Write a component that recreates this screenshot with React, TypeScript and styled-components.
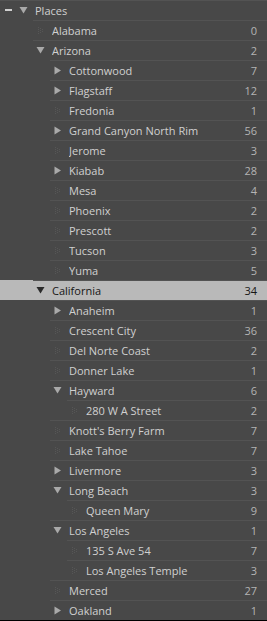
import styled, { createGlobalStyle } from 'styled-components';

type Node = {
	name: string;
	count?: number;
	level: number;
	kind: 'open' | 'closed' | 'leaf';
	selected?: boolean;
};

const rows: Node[] = [
	{ name: 'Places', level: 0, kind: 'open' },
	{ name: 'Alabama', count: 0, level: 1, kind: 'leaf' },
	{ name: 'Arizona', count: 2, level: 1, kind: 'open' },
	{ name: 'Cottonwood', count: 7, level: 2, kind: 'closed' },
	{ name: 'Flagstaff', count: 12, level: 2, kind: 'closed' },
	{ name: 'Fredonia', count: 1, level: 2, kind: 'leaf' },
	{ name: 'Grand Canyon North Rim', count: 56, level: 2, kind: 'closed' },
	{ name: 'Jerome', count: 3, level: 2, kind: 'leaf' },
	{ name: 'Kiabab', count: 28, level: 2, kind: 'closed' },
	{ name: 'Mesa', count: 4, level: 2, kind: 'leaf' },
	{ name: 'Phoenix', count: 2, level: 2, kind: 'leaf' },
	{ name: 'Prescott', count: 2, level: 2, kind: 'leaf' },
	{ name: 'Tucson', count: 3, level: 2, kind: 'leaf' },
	{ name: 'Yuma', count: 5, level: 2, kind: 'leaf' },
	{ name: 'California', count: 34, level: 1, kind: 'open', selected: true },
	{ name: 'Anaheim', count: 1, level: 2, kind: 'closed' },
	{ name: 'Crescent City', count: 36, level: 2, kind: 'leaf' },
	{ name: 'Del Norte Coast', count: 2, level: 2, kind: 'leaf' },
	{ name: 'Donner Lake', count: 1, level: 2, kind: 'leaf' },
	{ name: 'Hayward', count: 6, level: 2, kind: 'open' },
	{ name: '280 W A Street', count: 2, level: 3, kind: 'leaf' },
	{ name: "Knott's Berry Farm", count: 7, level: 2, kind: 'leaf' },
	{ name: 'Lake Tahoe', count: 7, level: 2, kind: 'leaf' },
	{ name: 'Livermore', count: 3, level: 2, kind: 'closed' },
	{ name: 'Long Beach', count: 3, level: 2, kind: 'open' },
	{ name: 'Queen Mary', count: 9, level: 3, kind: 'leaf' },
	{ name: 'Los Angeles', count: 1, level: 2, kind: 'open' },
	{ name: '135 S Ave 54', count: 7, level: 3, kind: 'leaf' },
	{ name: 'Los Angeles Temple', count: 3, level: 3, kind: 'leaf' },
	{ name: 'Merced', count: 27, level: 2, kind: 'leaf' },
	{ name: 'Oakland', count: 1, level: 2, kind: 'closed' },
];

// faint dotted triangle used for rows with no children
const leafDots = [
	[2, 1], [2, 3], [2, 5], [2, 7],
	[4, 2], [4, 4], [4, 6],
	[6, 3], [6, 5],
];

const Disclosure = ({ kind, dark }: { kind: Node['kind']; dark?: boolean }) => {
	const fill = dark ? '#2a2a2a' : '#a9a9a9';
	if (kind === 'open')
		return (
			<svg width='9' height='8' viewBox='0 0 9 8'>
				<polygon points='0.5,1 8.5,1 4.5,7.5' fill={fill} />
			</svg>
		);
	if (kind === 'closed')
		return (
			<svg width='9' height='9' viewBox='0 0 9 9'>
				<polygon points='1.5,0.5 8,4.5 1.5,8.5' fill={fill} />
			</svg>
		);
	return (
		<svg width='9' height='9' viewBox='0 0 9 9'>
			{leafDots.map(([x, y]) => (
				<rect key={`${x}-${y}`} x={x} y={y} width='1' height='1' fill='#565656' />
			))}
		</svg>
	);
};

const App = () => {
	return (
		<>
			<GlobalStyle />
			<Panel>
				{rows.map((row, i) => (
					<Row key={i} selected={!!row.selected} first={i === 0}>
						<Line indent={row.level === 0 ? 0 : 33 + (row.level - 1) * 17} />
						{row.level === 0 && <Minus />}
						<Twisty level={row.level}>
							<Disclosure kind={row.kind} dark={row.selected} />
						</Twisty>
						<Name selected={!!row.selected}>{row.name}</Name>
						<Count selected={!!row.selected}>{row.count ?? ''}</Count>
					</Row>
				))}
			</Panel>
		</>
	);
};

export default App;

const GlobalStyle = createGlobalStyle`
	html, body {
		margin: 0;
		padding: 0;
		background: #000;
	}
	body {
		font-family: 'Open Sans', 'DejaVu Sans', sans-serif;
	}
`;

const Panel = styled.div`
	width: 267px;
	height: 620px;
	background: #484848;
	display: flex;
	flex-direction: column;
	overflow: hidden;
`;

const Row = styled.div<{ selected: boolean; first: boolean }>`
	position: relative;
	display: flex;
	align-items: center;
	height: 20px;
	flex-shrink: 0;
	padding-right: 10px;
	background: ${({ selected }) => (selected ? '#b9b9b9' : 'transparent')};
	${({ first }) => first && 'box-shadow: inset 0 1px 0 #565656;'}
`;

const Line = styled.div<{ indent: number }>`
	position: absolute;
	top: 0;
	left: ${({ indent }) => indent}px;
	right: 0;
	height: 1px;
	background: #535353;
`;

const Minus = styled.span`
	position: absolute;
	left: 5px;
	top: 9px;
	width: 7px;
	height: 2px;
	background: #d0d0d0;
`;

const Twisty = styled.span<{ level: number }>`
	display: flex;
	align-items: center;
	justify-content: flex-start;
	width: 15px;
	margin-left: ${({ level }) => 19 + level * 17}px;
	flex-shrink: 0;
	height: 20px;
`;

const Name = styled.span<{ selected: boolean }>`
	flex: 1;
	font-size: 11px;
	color: ${({ selected }) => (selected ? '#161616' : '#d0d0d0')};
	white-space: nowrap;
	overflow: hidden;
	margin-left: 1px;
`;

const Count = styled.span<{ selected: boolean }>`
	font-size: 11px;
	color: ${({ selected }) => (selected ? '#161616' : '#b4b4b4')};
`;
